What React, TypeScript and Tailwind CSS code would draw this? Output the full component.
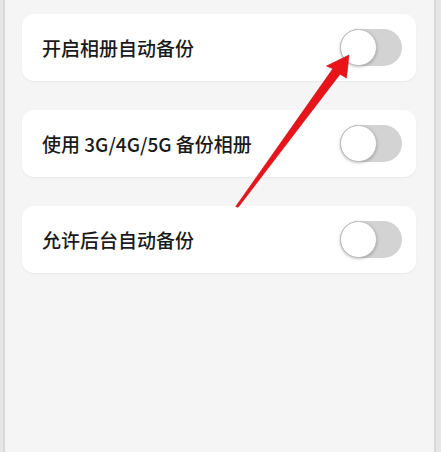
const rows = ['开启相册自动备份', '使用 3G/4G/5G 备份相册', '允许后台自动备份'];

function Toggle() {
  return (
    <div className="relative h-[37px] w-[62px] shrink-0 rounded-full bg-[#d3d3d3]">
      <div className="absolute left-0 top-0 h-[37px] w-[37px] rounded-full border border-[#bdbdbd] bg-white shadow-[0_1px_3px_rgba(0,0,0,0.25)]" />
    </div>
  );
}

export default function App() {
  return (
    <div className="relative flex h-[452px] w-[441px] bg-[#e6e6e6] pl-[3px] pr-[5px] font-['Noto_Sans_CJK_SC','Noto_Sans',sans-serif]">
      <div className="flex flex-1 flex-col gap-[29px] border-x-2 border-[#d9d9d9] bg-[#f5f5f5] pl-[17px] pr-[18px] pt-[14px]">
        {rows.map(label => (
          <div
            key={label}
            className="flex h-[67px] items-center justify-between rounded-[12px] bg-white pl-[20px] pr-[14px] shadow-[0_1px_2px_rgba(0,0,0,0.05)]"
          >
            <span className="text-[19px] font-medium leading-none text-[#1a1a1a]">{label}</span>
            <Toggle />
          </div>
        ))}
      </div>

      {/* 指示箭头 */}
      <svg className="pointer-events-none absolute left-0 top-0" width="441" height="452" viewBox="0 0 441 452">
        <polygon
          points="235.8,206.5 238.2,207.3 340,74.2 346.5,78 349,55 326.5,66 332.8,68.8"
          fill="#e8141a"
          stroke="#c40d12"
          strokeWidth="0.6"
          strokeLinejoin="round"
        />
      </svg>
    </div>
  );
}
